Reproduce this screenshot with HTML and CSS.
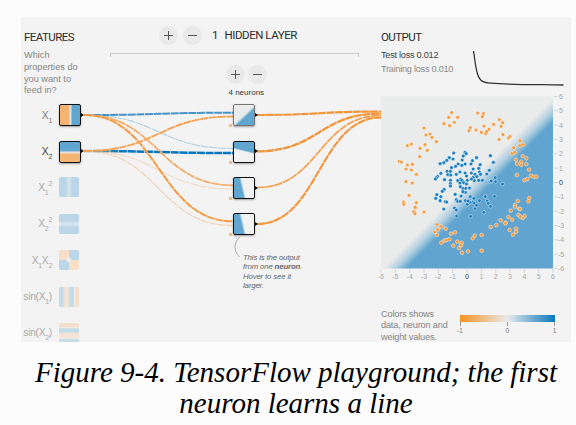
FILE: index.html
```html
<!DOCTYPE html>
<html lang="en">
<head>
<meta charset="utf-8">
<title>TensorFlow playground</title>
<link rel="stylesheet" href="styles.css">
</head>
<body>
<figure class="figure">
  <div class="panel">
    <svg class="links" viewBox="21 17 550 325" aria-hidden="true">
      <defs>
        <linearGradient id="fadeBlue" gradientUnits="userSpaceOnUse" x1="84" y1="0" x2="120" y2="0"><stop offset="0" stop-color="#c8a878"/><stop offset="1" stop-color="#0877bd"/></linearGradient>
      </defs>
      <g class="link">
        <path d="M84 151C158.500 151 158.500 189 233 189" stroke="#f0dcc8" stroke-width="1.200"/>
        <path d="M84 151C158.500 151 158.500 225.500 233 225.500" stroke="#f0d6bc" stroke-width="1.300"/>
        <path d="M84 115C158.500 115 158.500 148.500 233 148.500" stroke="#b5d2e5" stroke-width="1.200"/>
        <path d="M84 115C158.500 115 158.500 112.700 233 112.700" stroke="#4593c8" stroke-width="2"/>
        <path d="M84 151C158.500 151 158.500 153 233 153" stroke="url(#fadeBlue)" stroke-width="2.500"/>
        <path d="M84 115C158.500 115 158.500 185.300 233 185.300" stroke="#f4ab64" stroke-width="1.700"/>
        <path d="M84 115C158.500 115 158.500 221.300 233 221.300" stroke="#f39a43" stroke-width="2"/>
        <path d="M84 151C158.500 151 158.500 116.500 233 116.500" stroke="#f4a356" stroke-width="1.900"/>
        <path d="M257 115C319 115 319 111.500 381 111.500" stroke="#f2953a" stroke-width="2.200"/>
        <path d="M257 151.300C319 151.300 319 113.500 381 113.500" stroke="#f2953a" stroke-width="2.300"/>
        <path d="M257 187.600C319 187.600 319 115.500 381 115.500" stroke="#f4a356" stroke-width="1.800"/>
        <path d="M257 224C319 224 319 117.500 381 117.500" stroke="#f2953a" stroke-width="2.100"/>
      </g>
      <path class="callout-line" d="M239.500 237C233 244 234 251 239.500 257"/>
    </svg>

    <section class="features">
      <h2>FEATURES</h2>
      <p class="hint">Which<br>properties do<br>you want to<br>feed in?</p>
      <div class="feature"><span class="label on">X<sub>1</sub></span><i class="tile active x1"></i></div>
      <div class="feature"><span class="label on dark">X<sub>2</sub></span><i class="tile active x2"></i></div>
      <div class="feature off"><span class="label">X<sub>1</sub><sup>2</sup></span><i class="tile x1sq"></i></div>
      <div class="feature off"><span class="label">X<sub>2</sub><sup>2</sup></span><i class="tile x2sq"></i></div>
      <div class="feature off"><span class="label">X<sub>1</sub>X<sub>2</sub></span><i class="tile x1x2"></i></div>
      <div class="feature off"><span class="label">sin(X<sub>1</sub>)</span><i class="tile sin1"></i></div>
      <div class="feature off"><span class="label">sin(X<sub>2</sub>)</span><i class="tile sin2"></i></div>
    </section>

    <section class="network">
      <div class="layer-bar">
        <button class="round plus"></button><button class="round"></button>
        <span class="count">1</span><h2>HIDDEN LAYER</h2>
      </div>
      <div class="bracket"></div>
      <div class="neuron-bar"><button class="round plus"></button><button class="round"></button></div>
      <p class="neuron-count">4 neurons</p>
      <div class="neuron"><i class="tile active n1"></i></div>
      <div class="neuron"><i class="tile active n2"></i></div>
      <div class="neuron"><i class="tile active n3"></i></div>
      <div class="neuron"><i class="tile active n3"></i></div>
      <p class="callout">This is the output<br>from one <b>neuron</b>.<br>Hover to see it<br>larger.</p>
    </section>

    <section class="output">
      <div class="summary">
        <div>
          <h2>OUTPUT</h2>
          <p class="loss test">Test loss 0.012</p>
          <p class="loss">Training loss 0.010</p>
        </div>
        <svg class="curve" viewBox="471 48 94 40"><path d="M473.500 51C475 60 475.500 68 477.500 74C480 82 484 82.500 491 83.200C510 84.700 535 84.500 563.500 85"/></svg>
      </div>
      <svg class="plot" viewBox="0 0 190 190">
        <defs>
          <linearGradient id="field" gradientUnits="userSpaceOnUse" x1="0" y1="6.500" x2="172" y2="178.500">
            <stop offset=".505" stop-color="#eaeceb"/><stop offset=".54" stop-color="#b4d0e1"/><stop offset=".575" stop-color="#60a4cf"/>
          </linearGradient>
        </defs>
        <rect y="6.500" width="172" height="172" fill="url(#field)"/>
        <g id="dots"></g>
        <g id="axes"></g>
      </svg>
      <div class="legend">
        <p class="hint">Colors shows<br>data, neuron and<br>weight values.</p>
        <div class="scale">
          <div class="bar"></div>
          <div class="ticks"><span>-1</span><span>0</span><span>1</span></div>
        </div>
      </div>
    </section>
  </div>
  <figcaption><span class="line1">Figure 9-4. TensorFlow playground; the first</span><br><span class="line2">neuron learns a line</span></figcaption>
</figure>
<script src="plot.js"></script>
</body>
</html>
```
FILE: plot.js
```js
// Each group holds x,y pairs on its own grid: px = x / sx + ox, py = y / sy + oy.
const groups = [
  { color: '#f59a3e', ox: -6, oy: 0, sx: 3, sy: 3, pts: [
    230,68,221,82,248,82,238,97,207,101,224,107,147,114,153,135,165,132,171,142,184,155,109,162,97,167,
    150,164,135,175,157,181,134,200,73,214,79,216,97,225,112,223,93,237,109,240,124,253,93,275,112,279] },
  { color: '#f59a3e', ox: 84, oy: 0, sx: 3, sy: 3, pts: [
    38,69,55,71,52,80,103,89,113,98,108,109,86,103,57,108,16,113,12,122,33,120,49,127,62,131,65,124,72,118,
    114,134,102,148,130,144,135,139,165,152,175,164,165,166,146,173,150,187,141,190,173,198,184,205,153,209,
    169,215,156,221,169,225,184,222,192,239,156,255,198,257,206,260,214,260,187,267,178,271] },
  { color: '#f59a3e', ox: -6, oy: 90, sx: 3, sy: 3, pts: [
    102,46,85,66,87,73,124,68,123,83,120,82,116,95,120,101,147,96,186,134,197,139,212,146,188,149,179,156,
    186,165,240,157,228,161,199,188,208,182,214,180,223,178,235,197,247,185,260,188,258,196,252,204,261,218,
    279,214,320,212,320,165,299,167,293,175] },
  { color: '#f59a3e', ox: 84, oy: 90, sx: 3, sy: 3, pts: [
    193,54,190,64,158,63,150,75,150,81,163,86,165,87,137,92,130,111,160,105,179,108,173,114,166,110,141,119,
    107,121,122,128,121,130,94,135,77,141,134,150,153,146,153,155,144,164] },
  { color: '#1a7fc0', ox: -381, oy: -90, sx: 2.722, sy: 3, pts: [
    1235,459,1223,473,1216,481,1208,488,1198,491,1233,477,1266,457,1269,461,1261,468,1258,480,1266,492,
    1257,496,1247,492,1240,499,1229,503,1297,473,1286,482,1282,492,1307,494,1303,505,1288,507,1305,516,
    1335,467,1343,487,1332,511,1200,520,1191,529,1188,533,1185,537,1210,539,1217,514,1226,514,1219,524,
    1227,525,1242,523,1252,516,1266,519,1270,528,1283,519,1293,523,1308,523,1325,522,1288,532,1298,530,
    1254,537,1257,541,1246,542,1252,549,1272,541,1262,548,1291,542,1303,541,1313,541,1226,541,1226,551,
    1226,558,1283,537,1270,552,1260,565,1268,565,1267,577,1260,575,1278,564,1253,560,1334,545,1349,545,
    1348,533,1368,552,1337,543,1209,568,1204,574,1189,584,1186,595,1200,590,1198,602,1212,605,1216,606,
    1208,627,1239,583,1242,599,1255,588,1246,604,1253,604,1267,602,1272,613,1237,624,1242,630,1243,648,
    1281,649,1280,590,1290,595,1286,606,1279,607,1291,610,1305,602,1297,616,1293,626,1321,590,1346,589,
    1326,603,1329,610,1335,619,1317,637,1274,603] }
];

const NS = 'http://www.w3.org/2000/svg';
function add(parent, tag, attrs, text) {
  const el = document.createElementNS(NS, tag);
  for (const key in attrs) el.setAttribute(key, attrs[key]);
  if (text !== undefined) el.textContent = text;
  parent.appendChild(el);
}

const dots = document.getElementById('dots');
for (const g of groups) {
  for (let i = 0; i < g.pts.length; i += 2) {
    add(dots, 'circle', { cx: g.pts[i] / g.sx + g.ox, cy: g.pts[i + 1] / g.sy + g.oy, r: 1.85, fill: g.color });
  }
}

const axes = document.getElementById('axes');
const step = 172 / 12;
for (let v = -6; v <= 6; v++) {
  const x = (v + 6) * step;
  const y = 6.5 + (6 - v) * step;
  const cls = v === 0 ? 'zero' : '';
  add(axes, 'path', { d: `M${x} 179v4M173 ${y}h4` });
  add(axes, 'text', { x: x, y: 189, class: cls }, v);
  add(axes, 'text', { x: 180, y: y + 2.6, class: 'side ' + cls }, v);
}
```
FILE: styles.css
```css
* { box-sizing: border-box; }
body {
  margin: 0;
  background: #fcfcfc;
  font-family: "Liberation Sans", Arial, sans-serif;
}
h2, p { margin: 0; font-weight: 400; }
.figure { margin: 0; padding: 17px 5px 0 21px; }
.panel {
  position: relative;
  display: grid;
  grid-template-columns: 84px 276px 190px;
  width: 550px;
  height: 325px;
  overflow: hidden;
  background: #f3f3f3;
}
h2 {
  font: 400 11.5px/14px Roboto, sans-serif;
  letter-spacing: -0.55px;
  color: #2c2c2c;
  white-space: nowrap;
}
.hint { font-size: 9.2px; line-height: 11.7px; color: #858585; white-space: nowrap; }

.links { position: absolute; inset: 0; width: 550px; height: 325px; }
.link path { fill: none; stroke-dasharray: 8 0.7; }
.callout-line { fill: none; stroke: #999; stroke-width: 0.8; }

.features { padding: 13px 0 0 3px; height: 325px; }
.features .hint { margin: 6.1px 0 0; height: 47px; }
.feature { display: flex; align-items: center; gap: 7px; height: 36.4px; margin-left: -8px; }
.feature.off { padding-bottom: 1.4px; }
.label { flex: 0 0 36px; text-align: right; font-size: 10.3px; letter-spacing: -0.3px; color: #aaa; white-space: nowrap; }
.label.on { color: #777; }
.label.dark { color: #444; }
.label sub, .label sup { font-size: 7px; line-height: 0; }
.label sup { vertical-align: 5px; }
.label sub { vertical-align: -3.5px; }

.tile { position: relative; display: block; width: 20px; height: 20px; border-radius: 2px; }
.tile.active {
  width: 22px;
  height: 22px;
  border: 1px solid #111;
  box-shadow: 0 1px 2px rgba(0, 0, 0, 0.35);
}
.tile.active::after {
  content: "";
  position: absolute;
  left: 21px;
  top: 7.500px;
  border: solid transparent;
  border-width: 2.500px 0 2.500px 3px;
  border-left-color: #111;
}
.x1 { background: linear-gradient(90deg, #f6b473 42%, #e8e4df 52%, #60a6d0 62%); }
.x2 { background: linear-gradient(180deg, #60a6d0 42%, #e8e4df 52%, #f6b473 62%); }
.x1sq { background: linear-gradient(90deg, #bbd6e8 35%, #d5e3eb 45%, #d5e3eb 55%, #bbd6e8 65%); }
.x2sq { background: linear-gradient(180deg, #bbd6e8 35%, #d5e3eb 45%, #d5e3eb 55%, #bbd6e8 65%); }
.x1x2 {
  background:
    radial-gradient(circle, #efefed 10%, transparent 22%),
    conic-gradient(#bbd6e8 25%, #f6dfc6 0 50%, #bbd6e8 0 75%, #f6dfc6 0);
}
.sin1 { background: linear-gradient(90deg, #c4dcea 18%, #f5e4d4 30% 45%, #c4dcea 55% 72%, #eeece8 77%, #f6dfca 85%); }
.sin2 { background: linear-gradient(180deg, #f6dfca 18%, #eeece8 23%, #c4dcea 30% 43%, #f5e4d4 54% 72%, #eeece8 77%, #c4dcea 83%); }

.network { padding-top: 8.8px; }
.round {
  position: relative;
  flex: none;
  width: 19px;
  height: 19px;
  padding: 0;
  border: 0;
  border-radius: 50%;
  background: #e9e9e9;
}
.round::before, .round.plus::after {
  content: "";
  position: absolute;
  left: 5px;
  top: 9px;
  width: 9px;
  height: 1px;
  background: #555;
}
.round.plus::after { transform: rotate(90deg); }
.layer-bar { display: flex; align-items: center; gap: 5.5px; height: 19px; padding-left: 53.5px; }
.layer-bar h2 { letter-spacing: -0.45px; }
.count { width: 8px; margin-left: 4.5px; margin-right: -1px; font: 11.5px/14px Roboto, sans-serif; color: #2c2c2c; }
.bracket { width: 249px; height: 4px; margin: 8.2px 0 0 4.5px; border: 1px solid #ccc; border-bottom: 0; }
.neuron-bar { display: flex; gap: 3px; margin: 8px 0 0 120.5px; }
.neuron-count { margin: 4.1px 0 0 123.5px; height: 9px; font-size: 8px; line-height: 9px; color: #333; white-space: nowrap; }
.neuron { display: flex; align-items: center; height: 36.4px; padding-left: 128px; }
.neuron .tile::before {
  content: "";
  position: absolute;
  left: -5px;
  top: 19px;
  width: 3px;
  height: 3px;
  background: #f5bb82;
}
.n1 { background: linear-gradient(137deg, #eaeceb 50%, #60a6d0 59%); }
.tile.n1 { border-color: #777; }
.n2 { background: linear-gradient(194deg, #60a6d0 42%, #f2f2f2 49%); }
.n3 { background: linear-gradient(77deg, #60a6d0 39%, #f2f2f2 49%); }
.callout { margin: 10px 0 0 138px; font-size: 7.8px; font-style: italic; line-height: 9.5px; letter-spacing: -0.15px; color: #666; white-space: nowrap; }

.output { padding-top: 13px; }
.summary { display: flex; height: 60px; }
.summary > div { width: 90px; }
.loss { font-size: 9.2px; line-height: 13.6px; color: #8a8a8a; white-space: nowrap; letter-spacing: -0.27px; }
.loss.test { margin-top: 5px; color: #444; }
.curve { width: 94px; height: 40px; margin-top: 18px; fill: none; stroke: #333; stroke-width: 1.3; }
.plot { display: block; width: 190px; height: 190px; overflow: visible; }
#dots circle { stroke: #fff; stroke-width: 0.6; stroke-opacity: 0.75; }
#axes path { stroke: #ccc; stroke-width: 0.7; }
#axes text { font-size: 7px; fill: #a5a5a5; text-anchor: middle; }
#axes text.zero { fill: #333; }
.legend { display: flex; margin-top: 28.5px; }
.legend .hint { width: 78.5px; letter-spacing: -0.18px; }
.scale { width: 95.5px; margin-top: 6px; }
.bar { height: 7px; background: linear-gradient(90deg, #f59322, #e8eaeb 50%, #0877bd); }
.ticks { display: flex; justify-content: space-between; margin: 0 -3.5px; }
.ticks span { width: 8px; font-size: 6.5px; line-height: 8px; text-align: center; color: #777; }
.ticks span::before { content: ""; display: block; width: 1px; height: 4px; margin: 0 auto 1px; background: #999; }

figcaption {
  width: 550px;
  margin-top: 15px;
  text-align: center;
  font: italic 29px/31.4px "Liberation Serif", "Times New Roman", serif;
  color: #000;
  white-space: nowrap;
}
```
